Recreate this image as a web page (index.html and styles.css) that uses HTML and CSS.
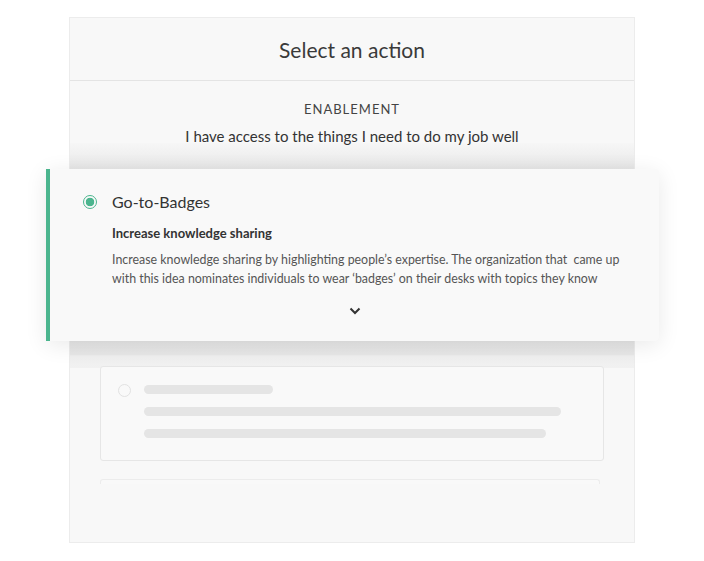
FILE: index.html
```html
<!DOCTYPE html>
<html lang="en">

<head>
    <meta charset="UTF-8">
    <meta name="viewport" content="width=device-width, initial-scale=1.0">
    <title>Select an action</title>

    <link rel="stylesheet" href="styles.css">

</head>

<body>
    <div class="panel">
        <!-- Topptekst -->
        <div class="panel-header">Select an action</div>

        <div class="category">
            <div class="category-name">ENABLEMENT</div>
            <div class="category-text">I have access to the things I need to do my job well</div>
        </div>

        <div class="shade shade-top"></div>

        <!-- Det valgte kortet -->
        <div class="action-card">
            <div class="action-title">
                <span class="radio radio-on"></span>
                Go-to-Badges
            </div>
            <div class="action-body">
                <h4>Increase knowledge sharing</h4>
                <p>Increase knowledge sharing by highlighting people’s expertise. The organization that &nbsp;came up with this idea nominates individuals to wear ‘badges’ on their desks with topics they know</p>
            </div>
            <div class="chevron">
                <svg width="12" height="8" viewBox="0 0 12 8">
                    <path d="M1.5 1.5 L6 6 L10.5 1.5" fill="none" stroke="#333" stroke-width="2" />
                </svg>
            </div>
        </div>

        <div class="shade shade-bottom"></div>

        <!-- Plassholdere -->
        <div class="list">
            <div class="skeleton">
                <span class="radio"></span>
                <div class="bars">
                    <div class="bar bar-short"></div>
                    <div class="bar bar-long"></div>
                    <div class="bar bar-mid"></div>
                </div>
            </div>
            <div class="skeleton skeleton-next"></div>
        </div>
    </div>
</body>

</html>
```

FILE: styles.css
```css
body {
    font-family: Lato, "Open Sans", sans-serif;
    margin: 0;
    background-color: #fff;
    color: #333;
}

.panel {
    width: 566px;
    height: 526px;
    margin: 17px auto 0;
    background-color: #f8f8f8;
    border: 1px solid #ececec;
    box-sizing: border-box;
    display: flex;
    flex-direction: column;
}

.panel-header {
    height: 63px;
    flex-shrink: 0;
    border-bottom: 1px solid #e4e4e4;
    box-sizing: border-box;
    display: flex;
    align-items: center;
    justify-content: center;
    font-size: 21px;
    color: #3a3a3a;
}

.category {
    height: 62px;
    flex-shrink: 0;
    box-sizing: border-box;
    text-align: center;
    padding-top: 20px;
    position: relative;
    z-index: 1;
}

.category-name {
    font-size: 13px;
    line-height: 16px;
    letter-spacing: 1px;
    color: #444;
}

.category-text {
    font-size: 15px;
    line-height: 18px;
    margin-top: 10px;
    color: #333;
}

.shade {
    flex-shrink: 0;
}

.shade-top {
    height: 26px;
    background: linear-gradient(#f6f6f6 0%, #f0f0f0 45%, #e6e6e6 100%);
}

.shade-bottom {
    height: 27px;
    background: linear-gradient(#e4e4e4 0%, #e7e7e7 50%, #efefef 56%, #f1f1f1 100%);
}

.action-card {
    height: 172px;
    flex-shrink: 0;
    margin: 0 -25px 0 -24px;
    background-color: #f9f9f9;
    border-left: 4px solid #4bb58e;
    border-radius: 0 4px 4px 0;
    box-shadow: 0 4px 22px rgba(0, 0, 0, 0.09);
    box-sizing: border-box;
    padding: 23px 0 0 33px;
    position: relative;
    z-index: 2;
}

.action-title {
    display: flex;
    align-items: center;
    gap: 15px;
    font-size: 16px;
    color: #333;
}

.radio {
    width: 14px;
    height: 14px;
    border-radius: 50%;
    border: 1.5px solid #e2e2e2;
    box-sizing: border-box;
    flex-shrink: 0;
}

.radio-on {
    border-color: #4bb58e;
    background: radial-gradient(circle, #4bb58e 0, #4bb58e 4px, #f9f9f9 4.6px);
}

.action-body {
    padding-left: 29px;
}

.action-body h4 {
    font-size: 13px;
    font-weight: bold;
    margin: 14px 0 0;
    color: #333;
}

.action-body p {
    font-size: 12.4px;
    line-height: 19px;
    margin: 9px 0 0;
    color: #555;
    padding-right: 30px;
}

.chevron {
    display: flex;
    justify-content: center;
    margin-top: 19px;
    margin-left: -33px;
}

.list {
    padding: 0 30px 0 30px;
    margin-top: -2px;
    flex: 1;
}

.skeleton {
    height: 95px;
    border: 1px solid #e6e6e6;
    border-radius: 3px;
    background-color: #f9f9f9;
    box-sizing: border-box;
    display: flex;
    gap: 13px;
    padding: 17px 0 0 17px;
}

.skeleton .radio {
    width: 13px;
    height: 13px;
}

.bars {
    flex: 1;
    display: flex;
    flex-direction: column;
    gap: 13px;
    padding-top: 1px;
}

.bar {
    height: 9px;
    border-radius: 5px;
    background-color: #e5e5e5;
}

.bar-short {
    width: 129px;
}

.bar-long {
    width: 417px;
}

.bar-mid {
    width: 402px;
}

.skeleton-next {
    height: 5px;
    padding: 0;
    margin: 18px 4px 0 0;
    border-bottom: none;
    border-radius: 3px 3px 0 0;
    border-color: #ececec;
}
```
